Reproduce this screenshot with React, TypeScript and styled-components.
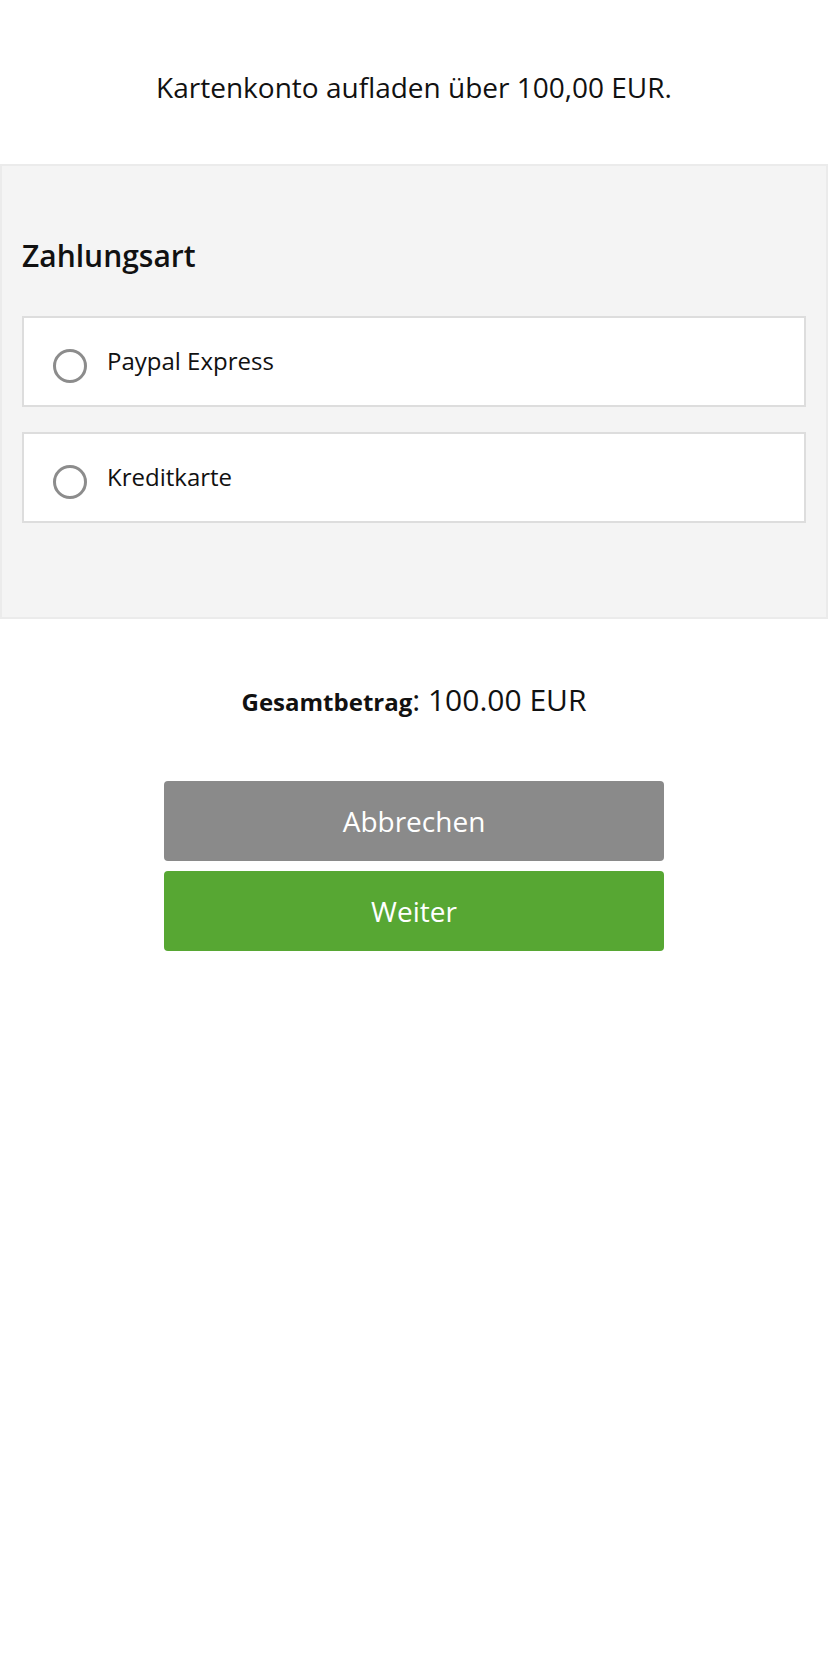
import React from "react";
import styled, { createGlobalStyle } from "styled-components";

const GlobalStyle = createGlobalStyle`
  html, body {
    margin: 0;
    padding: 0;
    background: #ffffff;
  }
  body {
    font-family: "Open Sans", "Noto Sans", sans-serif;
    color: #111111;
  }
  * { box-sizing: border-box; }
`;

const Page = styled.div`
  width: 828px;
  display: flex;
  flex-direction: column;
`;

const Header = styled.h1`
  margin: 0;
  padding: 67px 0 57px;
  font-size: 28px;
  line-height: 40px;
  font-weight: 400;
  text-align: center;
  color: #111111;
`;

const Panel = styled.section`
  background: #f4f4f4;
  border: 2px solid #ebebeb;
  padding: 70px 20px 94px;
  display: flex;
  flex-direction: column;
`;

const PanelTitle = styled.h2`
  margin: 0 0 40px;
  font-size: 30px;
  line-height: 40px;
  font-weight: 600;
  color: #111111;
`;

const Options = styled.div`
  display: flex;
  flex-direction: column;
  gap: 25px;
`;

const Option = styled.label`
  display: flex;
  align-items: center;
  gap: 20px;
  height: 91px;
  padding-left: 29px;
  background: #ffffff;
  border: 2px solid #dddddd;
  cursor: pointer;
`;

const Radio = styled.span`
  flex: none;
  width: 34px;
  height: 34px;
  margin-top: 8px;
  border-radius: 50%;
  border: 3px solid #8c8c8c;
  background: #ffffff;
`;

const OptionLabel = styled.span`
  font-size: 24px;
  line-height: 32px;
  color: #111111;
  margin-top: -1px;
`;

const Summary = styled.p`
  margin: 59px 0 0;
  text-align: center;
  font-size: 30px;
  line-height: 44px;
  color: #111111;
`;

const SummaryLabel = styled.strong`
  font-size: 24px;
  font-weight: 700;
`;

const Actions = styled.div`
  margin-top: 57px;
  display: flex;
  flex-direction: column;
  align-items: center;
  gap: 10px;
`;

const Button = styled.button<{ $variant: "cancel" | "primary" }>`
  width: 500px;
  height: 80px;
  border: none;
  border-radius: 4px;
  background: ${(p) => (p.$variant === "primary" ? "#57a733" : "#8a8a8a")};
  color: #ffffff;
  font-family: "Open Sans", "Noto Sans", sans-serif;
  font-size: 28px;
  font-weight: 400;
  cursor: pointer;
`;

const methods = ["Paypal Express", "Kreditkarte"];

export default function App() {
  return (
    <Page>
      <GlobalStyle />
      <Header>Kartenkonto aufladen über 100,00 EUR.</Header>
      <Panel>
        <PanelTitle>Zahlungsart</PanelTitle>
        <Options>
          {methods.map((m) => (
            <Option key={m}>
              <Radio />
              <OptionLabel>{m}</OptionLabel>
            </Option>
          ))}
        </Options>
      </Panel>
      <Summary>
        <SummaryLabel>Gesamtbetrag</SummaryLabel>: 100.00 EUR
      </Summary>
      <Actions>
        <Button $variant="cancel">Abbrechen</Button>
        <Button $variant="primary">Weiter</Button>
      </Actions>
    </Page>
  );
}
